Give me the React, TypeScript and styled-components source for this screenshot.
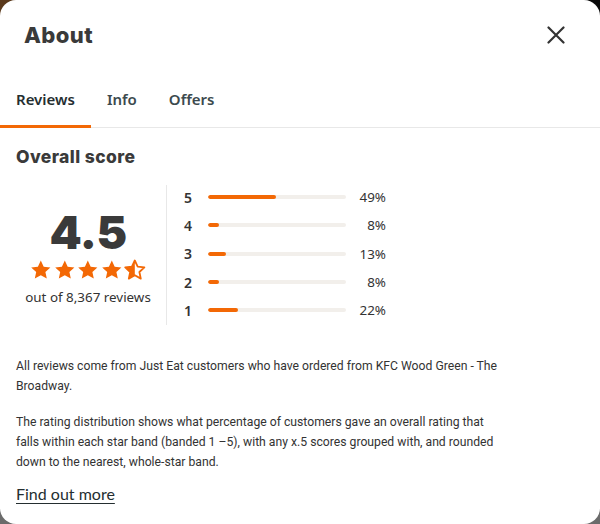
import React from "react";
import styled, { createGlobalStyle } from "styled-components";

const GlobalStyle = createGlobalStyle`
  html, body {
    margin: 0;
    padding: 0;
  }
  body {
    width: 600px;
    height: 524px;
    overflow: hidden;
    background:
      linear-gradient(90deg, #5b3a1c 0 50%, #0a0a0a 50% 100%) top / 100% 50% no-repeat,
      #6b6b6b;
    font-family: "Noto Sans", "Open Sans", sans-serif;
    color: #242e30;
  }
`;

const Modal = styled.div`
  width: 600px;
  height: 524px;
  background: #fff;
  border-radius: 16px;
  overflow: hidden;
  display: flex;
  flex-direction: column;
`;

const Header = styled.div`
  display: flex;
  align-items: center;
  justify-content: space-between;
  padding: 19px 32px 0 24px;
  height: 32px;
`;

const Title = styled.h2`
  margin: 0;
  font-family: "Inter", "Lato", sans-serif;
  font-weight: 800;
  font-size: 22px;
  color: #3a3a3a;
  letter-spacing: 0.4px;
`;

const CloseButton = styled.button`
  border: 0;
  background: none;
  padding: 0;
  width: 24px;
  height: 24px;
  display: flex;
  align-items: center;
  justify-content: center;
  cursor: pointer;
`;

const Tabs = styled.div`
  display: flex;
  margin-top: 26px;
  border-bottom: 1px solid #e8e8e8;
`;

const Tab = styled.div<{ $active?: boolean }>`
  padding: 12px 16px 19px;
  font-size: 15px;
  font-weight: 600;
  color: ${(p) => (p.$active ? "#242e30" : "#3c4a4e")};
  box-shadow: ${(p) => (p.$active ? "inset 0 -3px 0 #f36805" : "none")};
  margin-bottom: -1px;
`;

const Body = styled.div`
  padding: 18px 16px 0;
`;

const SectionTitle = styled.h3`
  margin: 0;
  font-family: "Inter", "Lato", sans-serif;
  font-weight: 800;
  font-size: 17.5px;
  letter-spacing: 0.4px;
  color: #3a3a3a;
`;

const ScoreArea = styled.div`
  display: flex;
  margin-top: 18px;
`;

const ScoreBox = styled.div`
  width: 144px;
  padding-right: 6px;
  display: flex;
  flex-direction: column;
  align-items: center;
  padding-top: 24px;
  border-right: 1px solid #e8e8e8;
  height: 116px;
`;

const BigScore = styled.div`
  font-family: "Inter", "Lato", sans-serif;
  font-weight: 900;
  font-size: 46px;
  line-height: 46px;
  letter-spacing: -0.5px;
  color: #3a3a3a;
`;

const Stars = styled.div`
  display: flex;
  margin-top: 3px;
`;

const ReviewCount = styled.div`
  margin-top: 6px;
  font-size: 13.4px;
  color: #333;
  white-space: nowrap;
`;

const Bars = styled.div`
  display: flex;
  flex-direction: column;
  gap: 10px;
  padding: 3px 0 0 17px;
`;

const BarRow = styled.div`
  display: flex;
  align-items: center;
  height: 18.3px;
`;

const BarLabel = styled.span`
  width: 24px;
  font-size: 14px;
  font-weight: 600;
  color: #333;
`;

const Track = styled.div`
  width: 138px;
  height: 4px;
  border-radius: 2px;
  background: #f2efeb;
  overflow: hidden;
`;

const Fill = styled.div`
  height: 100%;
  background: #f36805;
  border-radius: 2px;
`;

const Percent = styled.span`
  width: 40px;
  text-align: right;
  font-size: 13.4px;
  color: #333;
`;

const Paragraph = styled.p`
  margin: 31px 0 0;
  max-width: 490px;
  font-family: "Roboto", "Noto Sans", sans-serif;
  font-size: 12.2px;
  line-height: 20px;
  color: #333;
  & + & {
    margin-top: 16px;
  }
`;

const Link = styled.a`
  display: inline-block;
  margin-top: 12px;
  font-family: "Lato", "Noto Sans", sans-serif;
  font-size: 16px;
  color: #242e30;
  text-decoration: underline;
  text-underline-offset: 3px;
`;

const starPath =
  "M12 2.5l2.9 6.2 6.7.7-5 4.6 1.4 6.6L12 17.2l-6 3.4 1.4-6.6-5-4.6 6.7-.7z";

const StarIcon = ({ half }: { half?: boolean }) => (
  <svg width="23.6" height="24" viewBox="0.2 0 23.6 24">
    <defs>
      <clipPath id="halfclip">
        <rect x="0" y="0" width="12" height="24" />
      </clipPath>
    </defs>
    {half ? (
      <>
        <path
          d={starPath}
          fill="none"
          stroke="#f36805"
          strokeWidth="1.8"
          strokeLinejoin="round"
        />
        <path d={starPath} fill="#f36805" clipPath="url(#halfclip)" />
      </>
    ) : (
      <path d={starPath} fill="#f36805" />
    )}
  </svg>
);

const rows = [
  { star: 5, pct: 49 },
  { star: 4, pct: 8 },
  { star: 3, pct: 13 },
  { star: 2, pct: 8 },
  { star: 1, pct: 22 },
];

const App = () => {
  return (
    <>
      <GlobalStyle />
      <Modal>
        <Header>
          <Title>About</Title>
          <CloseButton aria-label="Close">
            <svg width="18" height="18" viewBox="0 0 18 18">
              <path
                d="M1.5 1.5l15 15M16.5 1.5l-15 15"
                stroke="#333"
                strokeWidth="2.2"
                strokeLinecap="round"
              />
            </svg>
          </CloseButton>
        </Header>
        <Tabs>
          <Tab $active>Reviews</Tab>
          <Tab>Info</Tab>
          <Tab>Offers</Tab>
        </Tabs>
        <Body>
          <SectionTitle>Overall score</SectionTitle>
          <ScoreArea>
            <ScoreBox>
              <BigScore>4.5</BigScore>
              <Stars>
                <StarIcon />
                <StarIcon />
                <StarIcon />
                <StarIcon />
                <StarIcon half />
              </Stars>
              <ReviewCount>out of 8,367 reviews</ReviewCount>
            </ScoreBox>
            <Bars>
              {rows.map((r) => (
                <BarRow key={r.star}>
                  <BarLabel>{r.star}</BarLabel>
                  <Track>
                    <Fill style={{ width: `${r.pct}%` }} />
                  </Track>
                  <Percent>{r.pct}%</Percent>
                </BarRow>
              ))}
            </Bars>
          </ScoreArea>
          <Paragraph>
            All reviews come from Just Eat customers who have ordered from KFC
            Wood Green - The Broadway.
          </Paragraph>
          <Paragraph>
            The rating distribution shows what percentage of customers gave an
            overall rating that falls within each star band (banded 1 –5), with
            any x.5 scores grouped with, and rounded down to the nearest,
            whole-star band.
          </Paragraph>
          <Link href="#">Find out more</Link>
        </Body>
      </Modal>
    </>
  );
};

export default App;
